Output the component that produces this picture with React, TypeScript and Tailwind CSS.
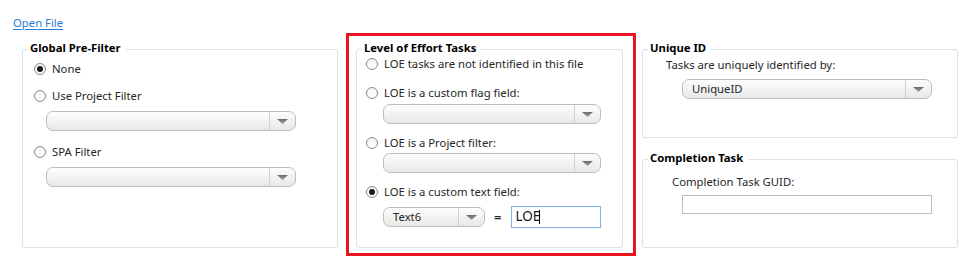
import React from "react";

const font = { fontFamily: '"Noto Sans", "Open Sans", sans-serif' };

function Radio({ checked = false }: { checked?: boolean }) {
  return (
    <span className="flex h-[12px] w-[12px] shrink-0 items-center justify-center rounded-full border border-[#8a8a8a] bg-gradient-to-b from-[#f4f4f4] to-white">
      {checked && <span className="h-[6px] w-[6px] rounded-full bg-[#1c1c1c]" />}
    </span>
  );
}

function RadioRow({ label, checked = false, className = "" }: { label: string; checked?: boolean; className?: string }) {
  return (
    <div className={"flex h-[18px] items-center gap-[6px] " + className}>
      <Radio checked={checked} />
      <span className="text-[11.3px] leading-none text-[#262626]">{label}</span>
    </div>
  );
}

function Arrow() {
  return (
    <svg width="11" height="5" viewBox="0 0 11 5">
      <defs>
        <linearGradient id="ag" x1="0" y1="0" x2="0" y2="1">
          <stop offset="0" stopColor="#6a6a6a" />
          <stop offset="1" stopColor="#a0a0a0" />
        </linearGradient>
      </defs>
      <path d="M0 0 H11 L5.5 5 Z" fill="url(#ag)" />
    </svg>
  );
}

function Combo({ className = "", text = "" }: { className?: string; text?: string }) {
  return (
    <div className={"flex h-[20px] shrink-0 rounded-[7px] border border-[#bdbdbd] bg-gradient-to-b from-[#fdfdfd] to-[#e8e8e8] " + className}>
      <div className="flex flex-1 items-center pl-[9px] text-[11.3px] leading-none text-[#262626]">{text}</div>
      <div className="flex w-[26px] items-center justify-center border-l border-[#cfcfcf]">
        <Arrow />
      </div>
    </div>
  );
}

function Box({ title, className = "", children }: { title: string; className?: string; children?: React.ReactNode }) {
  return (
    <div className={"relative rounded-[3px] border border-[#dae1e7] " + className}>
      <span className="absolute left-[5px] top-[-10px] bg-white pl-[2px] pr-[5px] text-[11.3px] font-bold leading-[16px] text-black">
        {title}
      </span>
      {children}
    </div>
  );
}

export default function App() {
  return (
    <div className="h-[265px] w-[980px] overflow-hidden bg-white" style={font}>
      <div className="h-[33px] pl-[13px] pt-[9px]">
        <a href="#" className="text-[11.3px] leading-[14px] text-[#2f7bd4] underline underline-offset-2">
          Open File
        </a>
      </div>
      <div className="flex items-start pl-[22px]">
        <Box title="Global Pre-Filter" className="mt-[16px] h-[199px] w-[316px] pl-[11px] pt-[10px]">
          <RadioRow label="None" checked />
          <RadioRow label="Use Project Filter" className="mt-[9px]" />
          <Combo className="ml-[12px] mt-[6px] w-[250px]" />
          <RadioRow label="SPA Filter" className="mt-[12px]" />
          <Combo className="ml-[12px] mt-[6px] w-[250px]" />
        </Box>

        <div className="ml-[8px] h-[223px] w-[290px] border-[3px] border-[#e8141f] pl-[7px] pt-[13px]">
          <Box title="Level of Effort Tasks" className="h-[199px] w-[267px] pl-[9px] pt-[5px]">
            <RadioRow label="LOE tasks are not identified in this file" />
            <RadioRow label="LOE is a custom flag field:" className="mt-[11px]" />
            <Combo className="ml-[17px] mt-[2px] w-[218px]" />
            <RadioRow label="LOE is a Project filter:" className="mt-[10px]" />
            <Combo className="ml-[17px] mt-[1px] w-[218px]" />
            <RadioRow label="LOE is a custom text field:" checked className="mt-[10px]" />
            <div className="ml-[17px] mt-[5px] flex h-[22px] items-center">
              <Combo className="w-[102px]" text="Text6" />
              <span className="ml-[9px] text-[13px] font-semibold leading-none text-[#262626]">=</span>
              <div className="ml-[10px] flex h-[22px] w-[90px] items-center border border-[#7fb3e8] bg-white pl-[3px]">
                <span className="text-[13.5px] leading-none text-[#1a1a1a]">LOE</span>
                <span className="ml-[-1px] h-[14px] w-[1px] bg-black" />
              </div>
            </div>
          </Box>
        </div>

        <div className="ml-[6px] mt-[16px] flex w-[316px] flex-col">
          <Box title="Unique ID" className="h-[89px] pt-[7px]">
            <div className="ml-[23px] flex h-[16px] items-center text-[11.3px] leading-none text-[#262626]">
              Tasks are uniquely identified by:
            </div>
            <Combo className="ml-[39px] mt-[6px] w-[250px]" text="UniqueID" />
          </Box>
          <Box title="Completion Task" className="mt-[21px] h-[89px] pt-[14px]">
            <div className="ml-[29px] flex h-[16px] items-center text-[11.3px] leading-none text-[#262626]">
              Completion Task GUID:
            </div>
            <div className="ml-[39px] mt-[5px] h-[19px] w-[250px] border border-[#bcbcbc] bg-white" />
          </Box>
        </div>
      </div>
    </div>
  );
}
